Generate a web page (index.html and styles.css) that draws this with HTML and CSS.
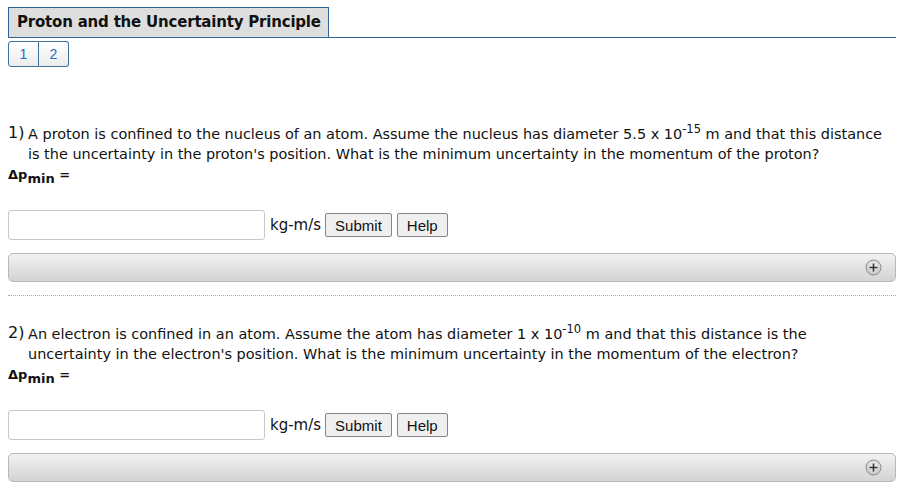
FILE: index.html
```html
<!DOCTYPE html>
<html>
<head>
<meta charset="utf-8">
<link rel="stylesheet" href="styles.css">
</head>
<body>
<div class="page">
  <div class="title-row"><h1 class="title">Proton and the Uncertainty Principle</h1></div>
  <div class="tabs"><span class="tab">1</span><span class="tab">2</span></div>

  <div class="problem first">
    <div class="q"><span class="num">1)</span><span class="qtext">A proton is confined to the nucleus of an atom. Assume the nucleus has diameter 5.5 x 10<sup>-15</sup> m and that this distance is the uncertainty in the proton's position. What is the minimum uncertainty in the momentum of the proton?</span></div>
    <div class="label">Δp<sub>min</sub> =</div>
    <div class="answer"><input class="field" type="text"><span class="unit">kg-m/s</span><button class="btn">Submit</button><button class="btn">Help</button></div>
    <div class="bar"><span class="plus"><svg width="17" height="17" viewBox="0 0 17 17"><defs><radialGradient id="g1" cx="50%" cy="40%" r="60%"><stop offset="0" stop-color="#f6f6f6"/><stop offset="1" stop-color="#c4c4c4"/></radialGradient></defs><circle cx="8.5" cy="8.5" r="7.5" fill="url(#g1)" stroke="#8a8a8a" stroke-width="1"/><path d="M8.5 4.5v8M4.5 8.5h8" stroke="#333" stroke-width="1.6"/></svg></span></div>
  </div>

  <div class="sep"></div>

  <div class="problem second">
    <div class="q"><span class="num">2)</span><span class="qtext">An electron is confined in an atom. Assume the atom has diameter 1 x 10<sup>-10</sup> m and that this distance is the uncertainty in the electron's position. What is the minimum uncertainty in the momentum of the electron?</span></div>
    <div class="label">Δp<sub>min</sub> =</div>
    <div class="answer"><input class="field" type="text"><span class="unit">kg-m/s</span><button class="btn">Submit</button><button class="btn">Help</button></div>
    <div class="bar"><span class="plus"><svg width="17" height="17" viewBox="0 0 17 17"><defs><radialGradient id="g2" cx="50%" cy="40%" r="60%"><stop offset="0" stop-color="#f6f6f6"/><stop offset="1" stop-color="#c4c4c4"/></radialGradient></defs><circle cx="8.5" cy="8.5" r="7.5" fill="url(#g2)" stroke="#8a8a8a" stroke-width="1"/><path d="M8.5 4.5v8M4.5 8.5h8" stroke="#333" stroke-width="1.6"/></svg></span></div>
  </div>
</div>
</body>
</html>
```
FILE: styles.css
```css
html, body { margin: 0; padding: 0; background: #fff; }
body { font-family: "DejaVu Sans", Verdana, sans-serif; color: #111; }
.page { padding: 7px 4px 0 8px; }

.title-row { border-bottom: 1px solid #2f6496; display: flex; }
.title {
  margin: 0;
  font-family: "DejaVu Sans", sans-serif;
  font-size: 15px;
  font-weight: bold;
  letter-spacing: -0.2px;
  line-height: 29px;
  padding: 0 7px 0 8px;
  background: #dedede;
  border: 1px solid #2f6496;
  border-bottom: none;
  color: #111;
}

.tabs { display: flex; margin-top: 3px; }
.tab {
  width: 29px; height: 24px;
  border: 1px solid #3f6f9c;
  border-radius: 3px;
  background: linear-gradient(#ffffff, #ececec);
  color: #1f6fc0;
  font-family: "Liberation Sans", Arial, sans-serif;
  font-size: 14px;
  display: flex; align-items: center; justify-content: center;
}
.tab:first-child { border-top-right-radius: 0; border-bottom-right-radius: 0; }
.tab + .tab { border-left: none; border-top-left-radius: 0; border-bottom-left-radius: 0; }

.problem.first { padding-top: 57px; }
.problem.second { padding-top: 28px; }
.q { display: flex; font-size: 14.45px; line-height: 20px; padding-right: 8px; }
.num { width: 20px; flex: none; font-size: 16px; line-height: 18px; }
.qtext { flex: 1; }
.qtext sup { font-size: 11.5px; line-height: 0; vertical-align: 6px; }
.label { font-size: 13px; font-weight: bold; line-height: 22px; }
.label sub { font-size: 13px; line-height: 0; }

.answer { display: flex; align-items: center; margin-top: 24px; }
.field {
  width: 257px; height: 30px; box-sizing: border-box;
  border: 1px solid #c8c8c8; border-radius: 3px; margin: 0; padding: 0 4px;
}
.unit { font-size: 15px; margin: 0 4px 0 5px; }
.btn {
  font-family: "Liberation Sans", Arial, sans-serif;
  font-size: 15px;
  height: 24px; padding: 0 9px; margin: 0 5px 0 0;
  border: 1px solid #858585; border-radius: 2px;
  background: #efefef; color: #111;
}

.bar {
  margin-top: 13px;
  height: 27px;
  border: 1px solid #b9b9b9;
  border-radius: 5px;
  background: linear-gradient(#f1f1f1, #d3d3d3);
  display: flex; align-items: center; justify-content: flex-end;
  padding-right: 13px;
}
.plus { display: flex; }

.sep { border-top: 1px dotted #aaa; margin-top: 13px; }
```
